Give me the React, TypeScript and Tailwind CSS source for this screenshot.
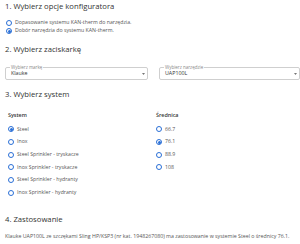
import React from "react";

const Radio = ({ checked }: { checked?: boolean }) => (
  <span className="w-[6px] h-[6px] rounded-full border-[0.8px] border-[#2a6fd6] flex items-center justify-center shrink-0">
    {checked && <span className="w-[3px] h-[3px] rounded-full bg-[#2a6fd6]" />}
  </span>
);

const Opt = ({ label, checked }: { label: string; checked?: boolean }) => (
  <div className="flex items-center gap-[3px] h-[12.7px]">
    <Radio checked={checked} />
    <span className="text-[5.2px] text-[#555] leading-none">{label}</span>
  </div>
);

const Select = ({ label, value, w }: { label: string; value: string; w: string }) => (
  <div className={`relative h-[13px] border-[0.8px] border-[#cfcfcf] rounded-[2px] ${w}`}>
    <span className="absolute left-[4px] top-[-3px] bg-white px-[1px] text-[4.5px] leading-none text-[#888]">{label}</span>
    <span className="absolute left-[5px] top-[3.4px] text-[5.3px] leading-none text-[#333]">{value}</span>
    <svg className="absolute right-[2px] top-[5px]" width="3" height="2" viewBox="0 0 3 2">
      <path d="M0 0 L1.5 2 L3 0 Z" fill="#777" />
    </svg>
  </div>
);

export default function App() {
  return (
    <div className="w-[300px] h-[244px] bg-white overflow-hidden text-[#333]" style={{ fontFamily: "'Open Sans', sans-serif" }}>
      <div className="pl-[5px]">
        <div className="h-[13px] flex items-center text-[7.7px] leading-none text-[#333]">1. Wybierz opcje konfiguratora</div>
        <div className="mt-[6px] flex flex-col pl-[1px]">
          <div className="flex items-center gap-[3px] h-[8px]">
            <Radio />
            <span className="text-[5.2px] text-[#555] leading-none">Dopasowanie systemu KAN-therm do narzędzia.</span>
          </div>
          <div className="flex items-center gap-[3px] h-[8px]">
            <Radio checked />
            <span className="text-[5.2px] text-[#555] leading-none">Dobór narzędzia do systemu KAN-therm.</span>
          </div>
        </div>
        <div className="mt-[8.5px] h-[13px] flex items-center text-[7.7px] leading-none">2. Wybierz zaciskarkę</div>
        <div className="mt-[10.5px] flex gap-[11px]">
          <Select label="Wybierz markę" value="Klauke" w="w-[143px]" />
          <Select label="Wybierz narzędzie" value="UAP100L" w="w-[141px]" />
        </div>
        <div className="mt-[8.5px] h-[13px] flex items-center text-[7.7px] leading-none">3. Wybierz system</div>
        <div className="mt-[10px] grid grid-cols-[148px_1fr] pl-[3px]">
          <div>
            <div className="h-[8px] flex items-center text-[5.4px] font-semibold leading-none text-[#333]">System</div>
            <div className="mt-[3.5px] flex flex-col">
              <Opt label="Steel" checked />
              <Opt label="Inox" />
              <Opt label="Steel Sprinkler - tryskacze" />
              <Opt label="Inox Sprinkler - tryskacze" />
              <Opt label="Steel Sprinkler - hydranty" />
              <Opt label="Inox Sprinkler - hydranty" />
            </div>
          </div>
          <div>
            <div className="h-[8px] flex items-center text-[5.4px] font-semibold leading-none text-[#333]">Średnica</div>
            <div className="mt-[3.5px] flex flex-col">
              <Opt label="66.7" />
              <Opt label="76.1" checked />
              <Opt label="88.9" />
              <Opt label="108" />
            </div>
          </div>
        </div>
        <div className="mt-[14.5px] h-[13px] flex items-center text-[7.7px] leading-none">4. Zastosowanie</div>
        <div className="mt-[7px] text-[5.25px] leading-none text-[#555] whitespace-nowrap">
          Klauke UAP100L ze szczękami Sling HP/KSP3 (nr kat. 1948267080) ma zastosowanie w systemie Steel o średnicy 76.1.
        </div>
      </div>
    </div>
  );
}
